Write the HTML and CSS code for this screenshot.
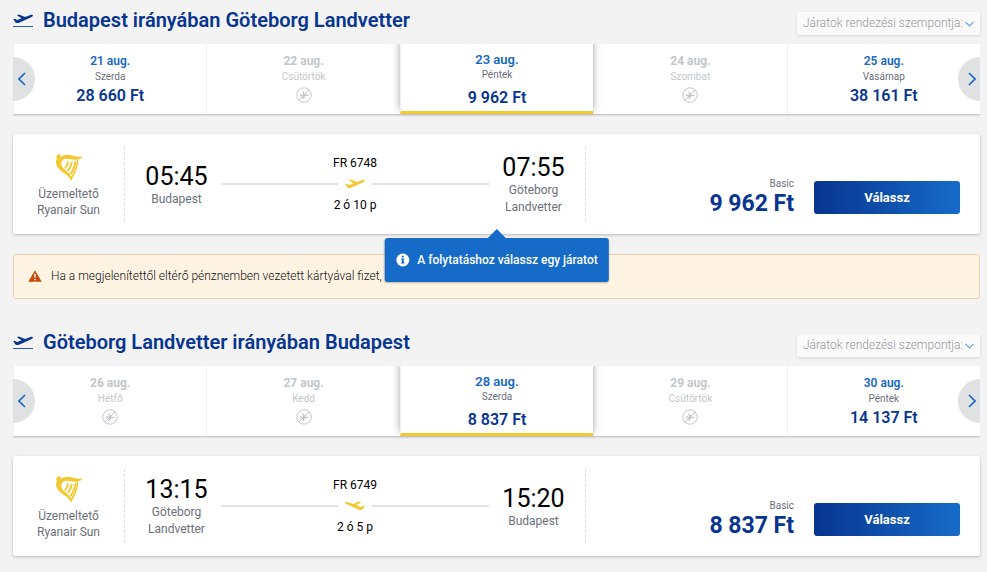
FILE: index.html
```html
<!DOCTYPE html>
<html lang="hu">
<head>
  <meta charset="UTF-8" />
  <meta name="viewport" content="width=device-width, initial-scale=1.0"/>
  <title>Járatválasztás</title>
  <link rel="stylesheet" href="styles.css">
</head>
<body>

<!-- Shared icons -->
<svg class="sprite" aria-hidden="true">
  <symbol id="icon-plane" viewBox="0 0 20 10">
    <path d="M.3 5.2 1.6 4.7 4.2 6 8.6 4.3 3.9 1.2 5.9.5 12 3 16.8 1.2C18.4.6 19.7.7 19.9 1.3 20.1 2 19 2.9 17.6 3.4L6.6 8.4C5 9.1 3.2 9.3 2.4 8.6Z"/>
  </symbol>
  <symbol id="icon-no-flight" viewBox="0 0 16 16">
    <circle cx="8" cy="8" r="7.2" fill="none" stroke="currentColor"/>
    <path d="M4 7.3 5 7.1 5.8 7.8H7.2L6.2 4.5H7.3L9.5 7.7H11.6C12.5 7.7 12.9 8 12.9 8.3S12.5 8.9 11.6 8.9H9.5L7.3 12H6.2L7.2 8.8H5.8L5 9.5 4 9.3 4.4 8.3Z" fill="currentColor"/>
    <path d="M2.9 13.1 13.1 2.9" stroke="currentColor"/>
  </symbol>
  <symbol id="icon-harp" viewBox="0 0 28 28">
    <path d="M2 6C.8 4.6 1.4 1.4 3.6 1.2 5.6 1 6.4 2.8 5.8 4.1 10 .8 14 1.6 18 2.8 21.5 3.9 25 4 27.6 3.4 26.5 5.2 24.8 5.9 23.2 6.1 23.4 14 20.5 20 16.1 27.7 13.8 22.5 10 20.7 6.4 18.2 2.7 15.6.7 11.6.9 8Z" fill="#f1c933"/>
    <path d="M8.2 6.4C12 5.4 16 7.2 22 6.7 21.6 13 19.6 18.2 16.2 23.6 14.3 19.6 11.2 17.8 8.6 15.4 6 12.9 5.4 9.5 8.2 6.4Z" fill="#fff"/>
    <path d="M13.2 8.4C12.8 11 11.6 13.4 9.9 15.4M16.9 8.8C16.4 12.3 14.9 15.2 12.8 17.8M20.6 8.2C20.2 12.9 18.2 17.2 15.6 21.2" fill="none" stroke="#f1c933" stroke-width="2"/>
  </symbol>
  <symbol id="icon-left" viewBox="0 0 8 14">
    <path d="M7 1 1 7l6 6" fill="none" stroke="currentColor" stroke-width="1.6"/>
  </symbol>
  <symbol id="icon-right" viewBox="0 0 8 14">
    <path d="m1 1 6 6-6 6" fill="none" stroke="currentColor" stroke-width="1.6"/>
  </symbol>
  <symbol id="icon-down" viewBox="0 0 8 6">
    <path d="m0 1 4 4 4-4" fill="none" stroke="currentColor" stroke-width="1.2"/>
  </symbol>
</svg>

<main>
  <!-- Outbound -->
  <section class="journey">
    <header class="journey-header">
      <span class="title-icon"><svg><use href="#icon-plane"/></svg></span>
      <h2>Budapest irányában Göteborg Landvetter</h2>
      <div class="sort">
        <select aria-label="Járatok rendezési szempontja">
          <option>Járatok rendezési szempontja:</option>
        </select>
        <svg><use href="#icon-down"/></svg>
      </div>
    </header>

    <div class="carousel">
      <button type="button" class="arrow prev" aria-label="Előző napok"><svg><use href="#icon-left"/></svg></button>
      <button type="button" class="day">
        <span class="date">21 aug.</span>
        <span class="weekday">Szerda</span>
        <span class="fare">28 660 Ft</span>
      </button>
      <button type="button" class="day" disabled>
        <span class="date">22 aug.</span>
        <span class="weekday">Csütörtök</span>
        <svg><use href="#icon-no-flight"/></svg>
      </button>
      <button type="button" class="day selected">
        <span class="date">23 aug.</span>
        <span class="weekday">Péntek</span>
        <span class="fare">9 962 Ft</span>
      </button>
      <button type="button" class="day" disabled>
        <span class="date">24 aug.</span>
        <span class="weekday">Szombat</span>
        <svg><use href="#icon-no-flight"/></svg>
      </button>
      <button type="button" class="day">
        <span class="date">25 aug.</span>
        <span class="weekday">Vasárnap</span>
        <span class="fare">38 161 Ft</span>
      </button>
      <button type="button" class="arrow next" aria-label="Következő napok"><svg><use href="#icon-right"/></svg></button>
    </div>

    <article class="flight">
      <div class="operator">
        <svg><use href="#icon-harp"/></svg>
        <span>Üzemeltető Ryanair Sun</span>
      </div>
      <div class="route">
        <div class="stop">
          <time>05:45</time>
          <span>Budapest</span>
        </div>
        <div class="leg">
          <span>FR 6748</span>
          <div class="line"><svg><use href="#icon-plane"/></svg></div>
          <span>2 ó 10 p</span>
        </div>
        <div class="stop">
          <time>07:55</time>
          <span>Göteborg Landvetter</span>
        </div>
      </div>
      <div class="price">
        <div class="amount">
          <small>Basic</small>
          <strong>9 962 Ft</strong>
        </div>
        <button type="button" class="select-btn">Válassz</button>
      </div>
      <div class="tooltip" role="tooltip">
        <svg viewBox="0 0 14 14">
          <circle cx="7" cy="7" r="6.5" fill="#fff"/>
          <path d="M6 2.8h2v1.7H6zM5.3 5.5H8v4h.8v1H5.2v-1H6v-3h-.7z" fill="#166bc8"/>
        </svg>
        <span>A folytatáshoz válassz egy járatot</span>
      </div>
    </article>
  </section>

  <div class="notice">
    <svg viewBox="0 0 14 12">
      <path d="M7 .3 13.7 11.7H.3Z" fill="#c24a02"/>
      <path d="M6.2 3.7h1.6L7.5 8h-1zM6.3 8.9h1.4v1.4H6.3z" fill="#fff"/>
    </svg>
    <span>Ha a megjelenítettől eltérő pénznemben vezetett kártyával fizet, a</span>
  </div>

  <!-- Return -->
  <section class="journey">
    <header class="journey-header">
      <span class="title-icon"><svg><use href="#icon-plane"/></svg></span>
      <h2>Göteborg Landvetter irányában Budapest</h2>
      <div class="sort">
        <select aria-label="Járatok rendezési szempontja">
          <option>Járatok rendezési szempontja:</option>
        </select>
        <svg><use href="#icon-down"/></svg>
      </div>
    </header>

    <div class="carousel">
      <button type="button" class="arrow prev" aria-label="Előző napok"><svg><use href="#icon-left"/></svg></button>
      <button type="button" class="day" disabled>
        <span class="date">26 aug.</span>
        <span class="weekday">Hétfő</span>
        <svg><use href="#icon-no-flight"/></svg>
      </button>
      <button type="button" class="day" disabled>
        <span class="date">27 aug.</span>
        <span class="weekday">Kedd</span>
        <svg><use href="#icon-no-flight"/></svg>
      </button>
      <button type="button" class="day selected">
        <span class="date">28 aug.</span>
        <span class="weekday">Szerda</span>
        <span class="fare">8 837 Ft</span>
      </button>
      <button type="button" class="day" disabled>
        <span class="date">29 aug.</span>
        <span class="weekday">Csütörtök</span>
        <svg><use href="#icon-no-flight"/></svg>
      </button>
      <button type="button" class="day">
        <span class="date">30 aug.</span>
        <span class="weekday">Péntek</span>
        <span class="fare">14 137 Ft</span>
      </button>
      <button type="button" class="arrow next" aria-label="Következő napok"><svg><use href="#icon-right"/></svg></button>
    </div>

    <article class="flight">
      <div class="operator">
        <svg><use href="#icon-harp"/></svg>
        <span>Üzemeltető Ryanair Sun</span>
      </div>
      <div class="route">
        <div class="stop">
          <time>13:15</time>
          <span>Göteborg Landvetter</span>
        </div>
        <div class="leg inbound">
          <span>FR 6749</span>
          <div class="line"><svg><use href="#icon-plane"/></svg></div>
          <span>2 ó 5 p</span>
        </div>
        <div class="stop">
          <time>15:20</time>
          <span>Budapest</span>
        </div>
      </div>
      <div class="price">
        <div class="amount">
          <small>Basic</small>
          <strong>8 837 Ft</strong>
        </div>
        <button type="button" class="select-btn">Válassz</button>
      </div>
    </article>
  </section>
</main>

</body>
</html>
```
FILE: styles.css
```css
* {
  box-sizing: border-box;
}
body {
  margin: 0;
  padding: 0 7px 16px 13px;
  background: #f3f3f3;
  font-family: Roboto, "Liberation Sans", sans-serif;
  font-size: 12px;
  color: #000;
}
button, select {
  font-family: inherit;
  border: none;
  cursor: pointer;
}
.sprite {
  display: none;
}

/* Header */
.journey-header {
  display: flex;
  align-items: center;
  height: 44px;
  padding-bottom: 4px;
}
.title-icon {
  width: 20px;
  padding-bottom: 2px;
  border-bottom: 1px solid #2b5ca8;
  color: #073590;
}
.title-icon svg {
  display: block;
  width: 20px;
  height: 10px;
  fill: currentColor;
}
.journey-header h2 {
  flex: 1;
  margin: 0 0 0 10px;
  font-size: 20px;
  font-weight: 600;
  line-height: 24px;
  color: #073590;
}
.sort {
  display: flex;
  align-items: center;
  align-self: flex-end;
  margin-bottom: 5px;
  height: 23px;
  padding: 0 6px;
  background: #fafafa;
  border-radius: 2px;
  box-shadow: 0 1px 3px rgba(0, 0, 0, 0.12);
}
.sort select {
  appearance: none;
  padding: 0 0 2px;
  background: none;
  font-size: 12px;
  font-weight: 300;
  color: #96989b;
}
.sort svg {
  width: 9px;
  height: 6px;
  margin-left: 1px;
  color: #73a6de;
}

/* Date carousel */
.carousel {
  position: relative;
  display: grid;
  grid-template-columns: repeat(5, 1fr);
  height: 70px;
  background: #fff;
  box-shadow: 0 1px 2px rgba(0, 0, 0, 0.25);
  clip-path: inset(0 0 -6px 0);
}
.day {
  display: flex;
  flex-direction: column;
  align-items: center;
  padding: 9px 0 0;
  background: #fff;
  border-left: 1px solid #f1f1f1;
}
.day .date {
  font-size: 12px;
  font-weight: 600;
  line-height: 16px;
  color: #1667c6;
}
.day .weekday {
  font-size: 10px;
  line-height: 16px;
  color: #6c7079;
}
.day .fare {
  font-size: 16px;
  font-weight: 600;
  line-height: 22px;
  color: #073590;
}
.day svg {
  width: 16px;
  height: 16px;
  margin-top: 2px;
}
.day:disabled,
.day:disabled .date,
.day:disabled .weekday {
  color: #c3c6cb;
}
.day:disabled .date {
  font-weight: 700;
}
.day.selected {
  z-index: 1;
  padding-top: 8px;
  border-bottom: 3px solid #f1c933;
  box-shadow: 0 -4px 8px rgba(0, 0, 0, 0.35);
}
.day.selected .date {
  font-size: 13px;
}
.day.selected .weekday {
  line-height: 14px;
}
.day.selected .fare {
  margin-top: 5px;
}
.arrow {
  position: absolute;
  top: 13px;
  z-index: 2;
  display: flex;
  align-items: center;
  width: 22px;
  height: 44px;
  padding: 0;
  background: #dfe1e3;
  color: #1667c6;
}
.arrow svg {
  width: 8px;
  height: 14px;
}
.prev {
  left: 0;
  padding-left: 5px;
  border-radius: 0 22px 22px 0;
}
.next {
  right: 0;
  padding-left: 10px;
  border-radius: 22px 0 0 22px;
}

/* Flight card */
.flight {
  position: relative;
  display: grid;
  grid-template-columns: 112px 461fr 394fr;
  margin-top: 20px;
  padding: 13px 0;
  min-height: 100px;
  background: #fff;
  border-radius: 2px;
  box-shadow: 0 1px 3px rgba(0, 0, 0, 0.25);
}
.operator {
  display: flex;
  flex-direction: column;
  align-items: center;
  padding: 6px 20px 0;
  border-right: 1px dashed #dcdddf;
  line-height: 16px;
  text-align: center;
  color: #6c7079;
}
.operator svg {
  width: 28px;
  height: 28px;
  margin-bottom: 5px;
}
.route {
  display: flex;
  align-items: center;
  gap: 13px;
  padding: 0 20px;
  border-right: 1px dashed #dcdddf;
}
.stop {
  display: flex;
  flex-direction: column;
  align-items: center;
  width: 63px;
  padding-top: 2px;
  line-height: 17px;
  text-align: center;
  color: #6c7079;
}
.stop time {
  font-size: 25px;
  line-height: 28px;
  color: #000;
}
.leg {
  flex: 1;
  text-align: center;
  line-height: 16px;
}
.leg > span {
  display: block;
}
.line {
  display: flex;
  align-items: center;
  gap: 7px;
  height: 26px;
}
.line::before,
.line::after {
  content: "";
  flex: 1;
  height: 2px;
  background: #e1e2e3;
}
.line svg {
  width: 20px;
  height: 10px;
  fill: #f1c933;
}
.inbound .line svg {
  transform: scaleX(-1);
}
.price {
  display: flex;
  justify-content: flex-end;
  align-items: flex-end;
  gap: 20px;
  padding: 0 20px 4px 0;
}
.amount {
  display: flex;
  flex-direction: column;
  align-items: flex-end;
  color: #073590;
}
.amount small {
  font-size: 10px;
  line-height: 14px;
  color: #6c7079;
}
.amount strong {
  font-size: 23px;
  font-weight: 700;
  line-height: 26px;
}
.select-btn {
  width: 146px;
  height: 33px;
  margin-bottom: 3px;
  background: linear-gradient(90deg, #073590, #166bc8);
  border-radius: 3px;
  color: #fff;
  font-size: 13px;
  font-weight: 700;
}

/* Tooltip under the card */
.tooltip {
  position: absolute;
  top: 104px;
  left: 50%;
  transform: translateX(-50%);
  z-index: 3;
  display: flex;
  align-items: center;
  gap: 8px;
  height: 44px;
  padding: 0 11px;
  background: #166bc8;
  border-radius: 3px;
  box-shadow: 0 1px 2px rgba(0, 0, 0, 0.25);
  color: #fff;
  font-weight: 500;
  white-space: nowrap;
}
.tooltip::before {
  content: "";
  position: absolute;
  bottom: 100%;
  left: 50%;
  margin-left: -9px;
  border: 9px solid transparent;
  border-top: none;
  border-bottom-color: #166bc8;
}
.tooltip svg {
  width: 14px;
  height: 14px;
}

/* Currency notice */
.notice {
  display: flex;
  align-items: center;
  gap: 9px;
  height: 45px;
  margin: 20px 0 23px;
  padding: 0 14px 2px;
  background: #fff4e4;
  border: 1px solid #f0cfb0;
  border-radius: 3px;
  font-weight: 300;
  color: #111;
}
.notice svg {
  width: 14px;
  height: 12px;
}
```
